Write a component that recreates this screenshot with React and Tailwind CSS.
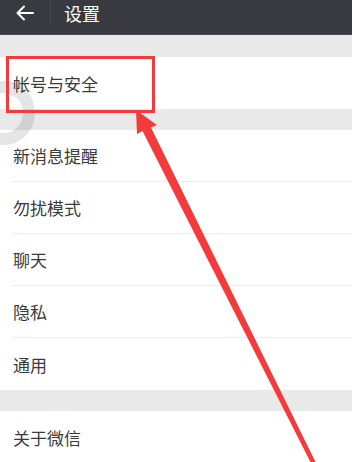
import React from 'react';

const groups = [
  ['帐号与安全'],
  ['新消息提醒', '勿扰模式', '聊天', '隐私', '通用'],
  ['关于微信'],
];

function Row({ label, last }) {
  return (
    <div className="h-[52px] pl-[13px] bg-white">
      <div className={`h-full flex items-center ${last ? '' : 'border-b border-[#ececec]'}`}>
        <span className="text-[17px] text-[#3a3a3a] leading-none">{label}</span>
      </div>
    </div>
  );
}

export default function App() {
  return (
    <div
      className="relative w-[352px] h-[462px] overflow-hidden bg-[#e9e9e9]"
      style={{ fontFamily: '"Noto Sans CJK SC", "Noto Sans", sans-serif' }}
    >
      <div className="h-[35px] bg-[#393a3f] flex items-start border-b border-[#4a4b4f]">
        <div className="w-[51px] h-[26px] flex items-center justify-center border-r border-[#46474b]">
          <svg width="18" height="16" viewBox="0 0 18 16" fill="none" stroke="#fff" strokeWidth="2" strokeLinecap="round" strokeLinejoin="round">
            <path d="M17 8H2M8 1.5L1.5 8 8 14.5" />
          </svg>
        </div>
        <span className="ml-[13px] text-[18px] leading-[26px] text-white">设置</span>
      </div>

      <div className="flex flex-col gap-[21px] pt-[22px]">
        {groups.map((g, gi) => (
          <div key={gi}>
            {g.map((label, i) => (
              <Row key={label} label={label} last={i === g.length - 1} />
            ))}
          </div>
        ))}
      </div>

      <svg className="absolute left-0 top-0 pointer-events-none" width="352" height="462">
        <circle cx="3" cy="113" r="26" fill="none" stroke="rgba(0,0,0,0.1)" strokeWidth="12" />
        <polygon
          fill="#f33b3b"
          points="136,110 157,125 151,127.5 317,465 313,467 142.5,131 137,134"
        />
      </svg>
      <div className="absolute left-[6px] top-[56px] w-[149px] h-[57px] border-[3px] border-[#f33b3b]" />
    </div>
  );
}
